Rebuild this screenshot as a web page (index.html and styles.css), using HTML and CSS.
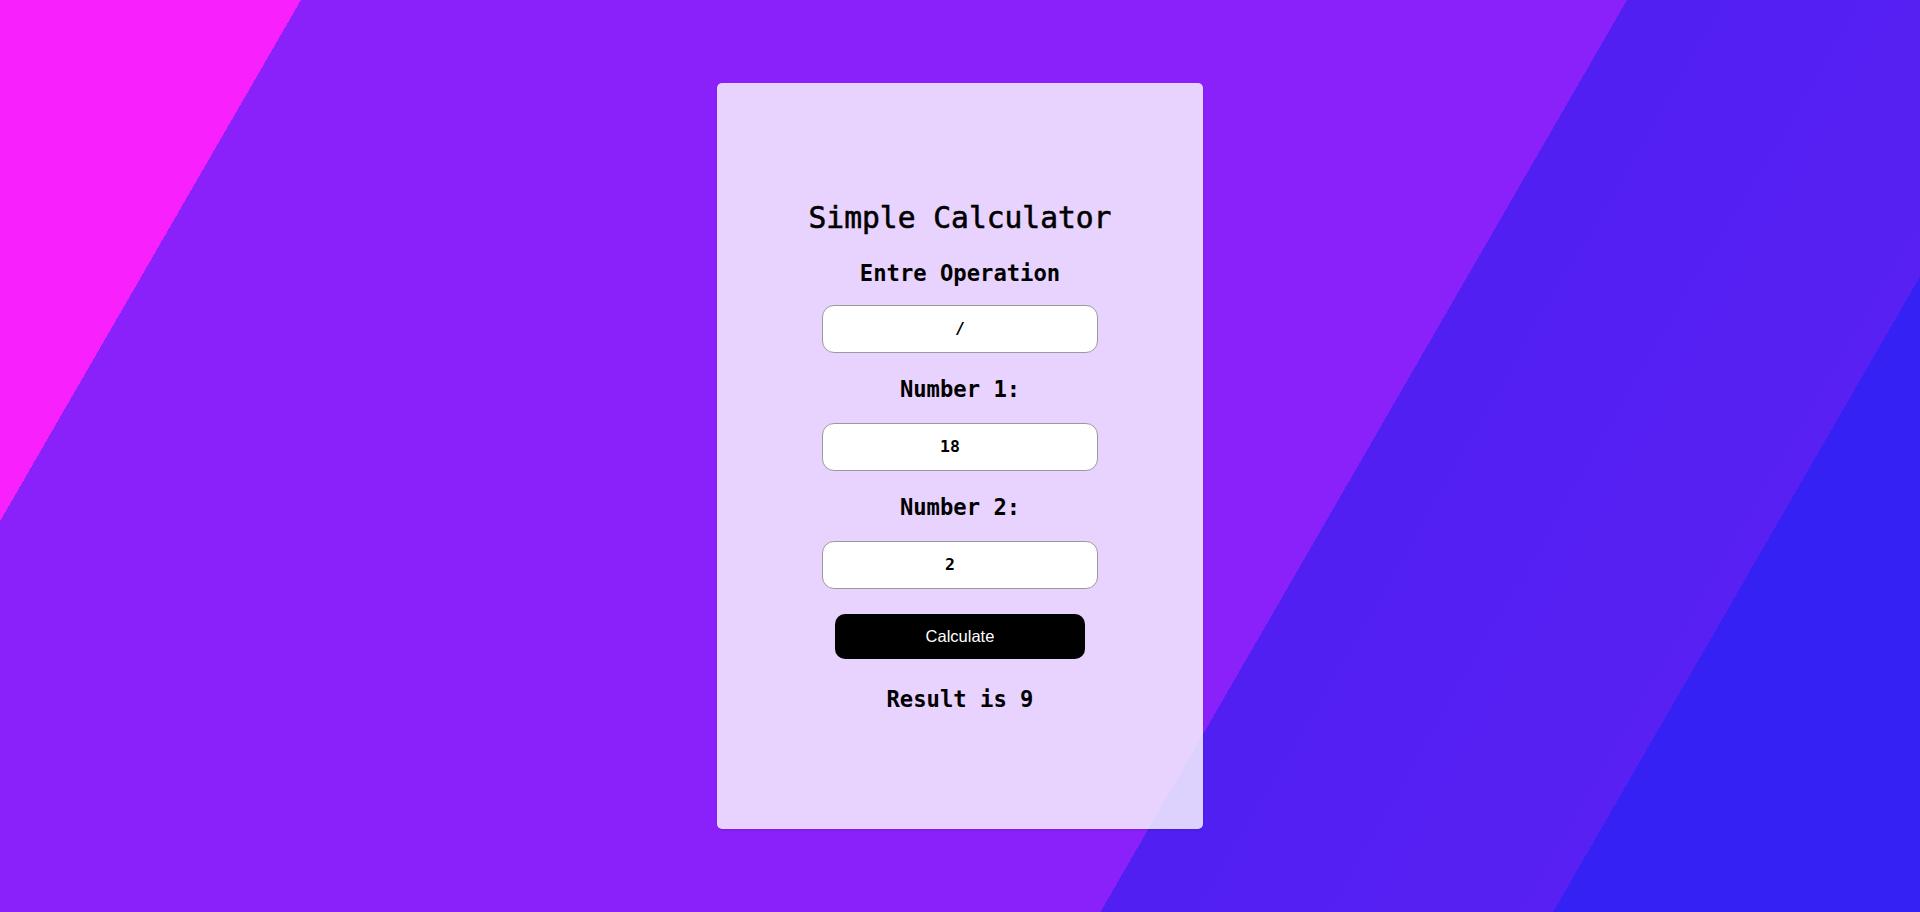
FILE: index.html
```html
<!DOCTYPE html>
<html lang="en">
<head>
<meta charset="utf-8">
<title>Simple Calculator</title>
<link rel="stylesheet" href="styles.css">
</head>
<body>
  <main class="card">
    <h1 class="title">Simple Calculator</h1>
    <h2 class="label first">Entre Operation</h2>
    <input class="field" type="text" value="/">
    <h2 class="label">Number 1:</h2>
    <input class="field num" type="number" value="18">
    <h2 class="label">Number 2:</h2>
    <input class="field num" type="number" value="2">
    <button class="calc" type="button">Calculate</button>
    <h2 class="result">Result is 9</h2>
  </main>
</body>
</html>
```

FILE: styles.css
```css
html, body {
  margin: 0;
  padding: 0;
  height: 100%;
}

body {
  height: 100vh;
  display: flex;
  align-items: center;
  justify-content: center;
  font-family: "DejaVu Sans Mono", "Liberation Mono", monospace;
  background: linear-gradient(120deg,
    #f821fe 0%, #f821fe 12.3%,
    #8a21fa 12.3%, #8a21fa 66.5%,
    #511ff2 66.5%, #5820f3 85%,
    #3521f3 85%, #3521f3 100%);
}

.card {
  box-sizing: border-box;
  width: 486px;
  height: 746px;
  background: rgba(255, 255, 255, 0.8);
  border-radius: 5px;
  box-shadow: 0 1px 2px rgba(40, 0, 90, 0.18);
  display: flex;
  flex-direction: column;
  align-items: center;
  justify-content: center;
  color: #000;
}

.title {
  margin: 0;
  font-size: 29.6px;
  line-height: 36px;
  font-weight: normal;
  -webkit-text-stroke: 0.6px #000;
}

.label,
.result {
  margin: 22px 0 0;
  font-size: 22.2px;
  line-height: 28px;
  font-weight: bold;
}

.label.first {
  margin-top: 23px;
}

.field {
  box-sizing: border-box;
  display: block;
  width: 276px;
  height: 48px;
  margin: 18px 0 0;
  padding: 0 12px;
  border: 1px solid #9a9a9a;
  border-radius: 12px;
  background: #fff;
  font-family: "DejaVu Sans Mono", "Liberation Mono", monospace;
  font-size: 16.5px;
  font-weight: bold;
  color: #000;
  text-align: center;
  outline: none;
}

.field.num {
  padding-right: 17px;
}

.label + .field {
  margin-top: 20px;
}

.label.first + .field {
  margin-top: 18px;
}

.calc {
  box-sizing: border-box;
  width: 250px;
  height: 45px;
  margin-top: 25px;
  border: none;
  border-radius: 10px;
  background: #000;
  color: #fff;
  font-family: "Liberation Sans", Arial, sans-serif;
  font-size: 16.5px;
  cursor: pointer;
}

.result {
  margin-top: 26px;
}
```
